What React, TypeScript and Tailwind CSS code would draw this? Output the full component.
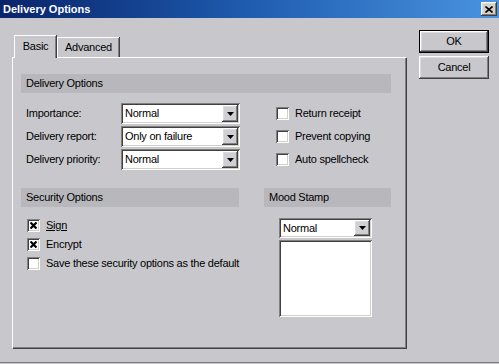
import React from "react";

// classic win2k bevels
const sunken =
  "shadow-[inset_1px_1px_0_#808080,inset_-1px_-1px_0_#ffffff,inset_2px_2px_0_#404040,inset_-2px_-2px_0_#d4d0c8]";
const raised =
  "shadow-[inset_-1px_-1px_0_#404040,inset_1px_1px_0_#ffffff,inset_-2px_-2px_0_#808080,inset_2px_2px_0_#dcdcdc]";

const DropArrow = () => (
  <span className={`flex w-[16px] h-full items-center justify-center bg-[#d0d0d4] ${raised}`}>
    <svg width="7" height="4" viewBox="0 0 7 4">
      <path d="M0 0h7L3.5 4z" fill="#000" />
    </svg>
  </span>
);

const Select = ({ value, className }: { value: string; className: string }) => (
  <div className={`flex items-stretch bg-white p-[2px] ${sunken} ${className}`}>
    <span className="flex flex-1 items-center pl-[2px] text-black">{value}</span>
    <DropArrow />
  </div>
);

const Check = ({ checked = false }: { checked?: boolean }) => (
  <span className={`flex h-[13px] w-[13px] shrink-0 items-center justify-center bg-white ${sunken}`}>
    {checked && (
      <svg width="7" height="7" viewBox="0 0 7 7">
        <path d="M0.5 0.5l6 6M6.5 0.5l-6 6" stroke="#000" strokeWidth="2.2" />
      </svg>
    )}
  </span>
);

const Header = ({ label, className = "" }: { label: string; className?: string }) => (
  <div className={`flex h-[19px] items-center bg-[#b8b8bc] pl-[5px] ${className}`}>{label}</div>
);

const Button = ({ label, isDefault = false }: { label: string; isDefault?: boolean }) => (
  <div
    className={`flex h-[23px] w-[70px] items-center justify-center bg-[#c8c8cc] ${
      isDefault ? "border border-black" : ""
    } ${raised}`}
  >
    {label}
  </div>
);

export default function App() {
  return (
    <div className="h-[364px] w-[499px] overflow-hidden bg-[#c8c8cc] font-['Liberation_Sans',Arial,sans-serif] text-[11px] tracking-[-0.25px] text-black">
      <div className="flex h-[363px] flex-col border-b border-[#7c7c80]">
        {/* Title bar */}
        <div className="flex h-[18px] items-center justify-between bg-gradient-to-r from-[#0a246a] via-[#1f5cb0] to-[#4a94e0] pl-[3px] pr-[2px]">
          <span className="text-[11px] font-bold tracking-normal text-white">Delivery Options</span>
          <span className={`flex h-[14px] w-[16px] items-center justify-center bg-[#d4d0c8] ${raised}`}>
            <svg width="8" height="7" viewBox="0 0 8 7">
              <path d="M0.5 0.5l7 6M7.5 0.5l-7 6" stroke="#000" strokeWidth="1.6" />
            </svg>
          </span>
        </div>

        <div className="flex flex-1 items-start pl-[12px] pt-[12px]">
          {/* Tabs + panel */}
          <div className="mt-[5px] flex flex-col">
            <div className="flex items-end pl-[2px]">
              <div className="relative z-10 -mb-[1px] flex h-[23px] w-[42px] items-center justify-center border-l border-t border-white bg-[#c8c8cc] pb-[2px] shadow-[inset_-1px_0_0_#808080,1px_0_0_#404040]">
                Basic
              </div>
              <div className="ml-[1px] flex h-[20px] w-[62px] items-center justify-center border-l border-t border-white shadow-[inset_-1px_0_0_#808080,1px_0_0_#404040]">
                Advanced
              </div>
            </div>
            <div className="h-[291px] w-[394px] border-l border-t border-white pl-[8px] pt-[16px] shadow-[inset_-1px_-1px_0_#808080,1px_1px_0_#404040]">
              <Header label="Delivery Options" className="w-[370px]" />

              <div className="mt-[10px] flex">
                <div className="flex w-[219px] flex-col gap-[2px]">
                  {[
                    ["Importance:", "Normal"],
                    ["Delivery report:", "Only on failure"],
                    ["Delivery priority:", "Normal"],
                  ].map(([label, value]) => (
                    <div key={label} className="flex items-center">
                      <span className="w-[100px] pl-[5px]">{label}</span>
                      <Select value={value} className="h-[21px] w-[119px]" />
                    </div>
                  ))}
                </div>
                <div className="ml-[36px] flex flex-col gap-[10px] pt-[4px]">
                  {["Return receipt", "Prevent copying", "Auto spellcheck"].map((t) => (
                    <div key={t} className="flex h-[13px] items-center gap-[6px]">
                      <Check />
                      <span>{t}</span>
                    </div>
                  ))}
                </div>
              </div>

              <div className="mt-[18px] flex gap-[25px]">
                <div className="flex w-[218px] flex-col">
                  <Header label="Security Options" />
                  <div className="mt-[12px] flex flex-col gap-[6px] pl-[6px]">
                    <div className="flex h-[13px] items-center gap-[6px]">
                      <Check checked />
                      <span className="underline">Sign</span>
                    </div>
                    <div className="flex h-[13px] items-center gap-[6px]">
                      <Check checked />
                      <span>Encrypt</span>
                    </div>
                    <div className="flex h-[13px] items-center gap-[6px]">
                      <Check />
                      <span className="whitespace-nowrap">Save these security options as the default</span>
                    </div>
                  </div>
                </div>
                <div className="flex w-[127px] flex-col">
                  <Header label="Mood Stamp" />
                  <div className="mt-[11px] flex flex-col gap-[2px] pl-[15px]">
                    <Select value="Normal" className="h-[20px] w-[93px]" />
                    <div className={`h-[77px] w-[93px] bg-white ${sunken}`} />
                  </div>
                </div>
              </div>
            </div>
          </div>

          {/* Buttons */}
          <div className="ml-[13px] flex flex-col gap-[3px]">
            <Button label="OK" isDefault />
            <Button label="Cancel" />
          </div>
        </div>
      </div>
    </div>
  );
}
